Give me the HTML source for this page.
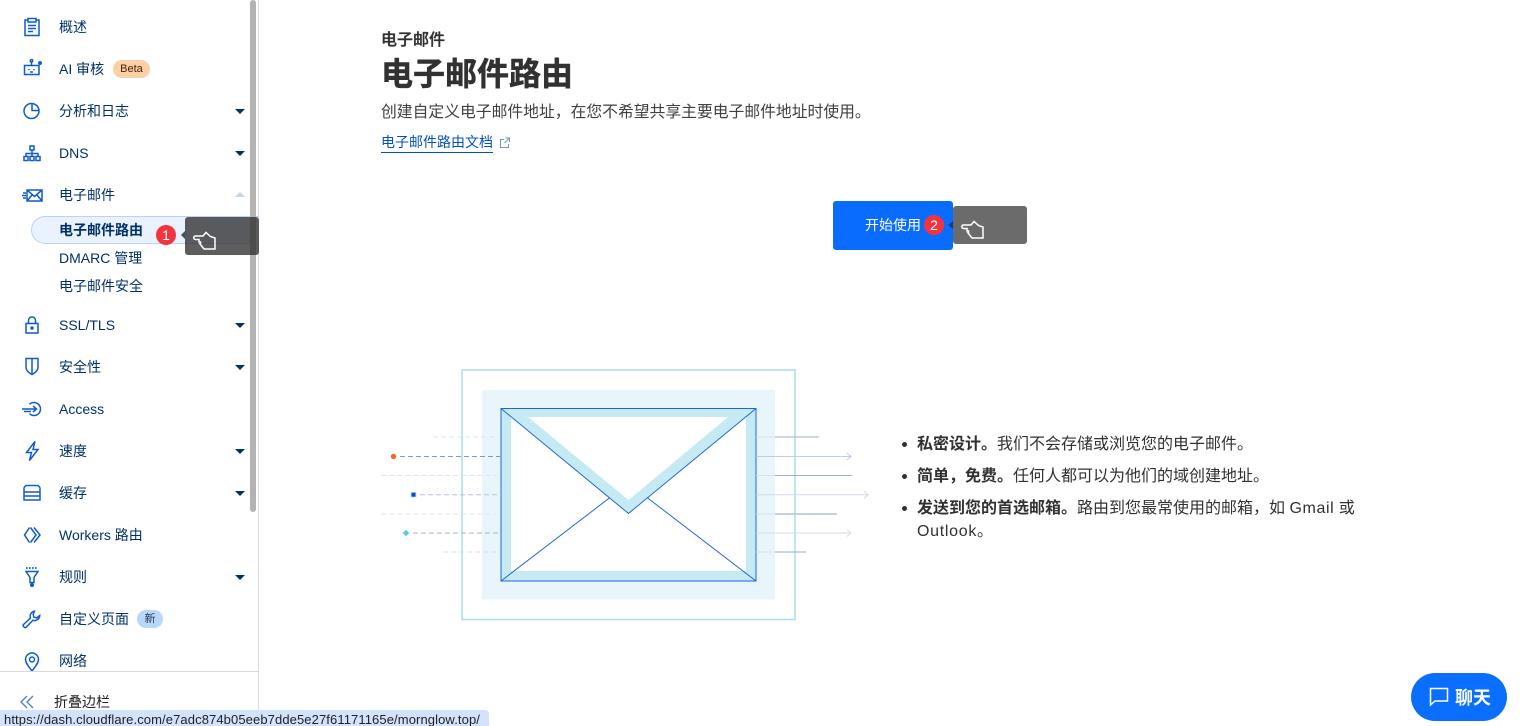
<!DOCTYPE html>
<html lang="zh"><head><meta charset="utf-8"><title>电子邮件路由</title>
<style>
html,body{margin:0;padding:0;width:1527px;height:726px;overflow:hidden;background:#fff}
body{position:relative;font-family:"Liberation Sans","Noto Sans CJK SC",sans-serif;color:#313131}
.a{position:absolute;white-space:nowrap}
.m{position:absolute;left:59px;height:20px;line-height:20px;font-size:14px;color:#00316b;white-space:nowrap}
.ic{position:absolute;left:20px;width:24px;height:24px;fill:none;stroke:#0f5ccb;stroke-width:1.5}
.dn{position:absolute;left:235px;width:0;height:0;border-left:5px solid transparent;border-right:5px solid transparent;border-top:5px solid #00316b}
.hand{position:absolute;fill:none;stroke:#fff;stroke-width:1.5}
.badge{position:absolute;width:20px;height:20px;border-radius:50%;background:#f5333f;color:#fff;font-size:14px;line-height:20px;text-align:center}
</style></head><body>
<!-- sidebar -->
<div class="a" style="left:258px;top:0;width:1px;height:726px;background:#dcdcdc"></div>
<div class="a" style="left:31px;top:216px;width:227px;height:26px;border:1px solid #b9d4f9;border-right:0;border-radius:14px 0 0 14px;background:#e9f2fe"></div>
<div class="a" style="left:250px;top:0;width:6px;height:512px;background:#b3b3b3;border-radius:3px"></div>

<svg class="ic" style="top:15px" viewBox="0 0 24 24"><path d="M8 5H5v15.500h14V5h-3M8 3.500h8V7H8zM8 10.500h8M8 13.500h8M8 16.500h5"/></svg>
<div class="m" style="top:17px">概述</div>
<svg class="ic" style="top:57px" viewBox="0 0 24 24"><path d="M4.500 8.500h14.500v9H4.500zM11.500 8.500V5M9 12v1.200M14 12v1.200M10 15h3"/><circle cx="11.500" cy="3.800" r="1.200"/><path d="M18 6h4M20 4v4M18.600 4.600l2.800 2.800M21.400 4.600l-2.800 2.800" stroke-width="1.200"/></svg>
<div class="m" style="top:59px">AI 审核</div>
<div class="a" style="left:113px;top:60px;width:37px;height:18px;border-radius:9px;background:#fbd0a6;color:#4a2004;font-size:11px;line-height:18px;text-align:center">Beta</div>
<svg class="ic" style="top:99px" viewBox="0 0 24 24"><circle cx="11.500" cy="12" r="7.500"/><path d="M12 4.500V11.500H19"/></svg>
<div class="m" style="top:101px">分析和日志</div><div class="dn" style="top:109px"></div>
<svg class="ic" style="top:141px" viewBox="0 0 24 24"><path d="M10 5h4v4h-4zM12 9v3.500M6 15.500v-3h12v3M12 12.500v3M4 15.500h4v4H4zM10 15.500h4v4h-4zM16 15.500h4v4h-4z"/></svg>
<div class="m" style="top:143px">DNS</div><div class="dn" style="top:151px"></div>
<svg class="ic" style="top:183px" viewBox="0 0 24 24"><path d="M7 7h15v11H7zM7 7l7.500 6.500L22 7M7 18l5-6M22 18l-5-6M3 10h3M2 12.500h4M3 15h3"/></svg>
<div class="m" style="top:185px">电子邮件</div>
<div class="a" style="left:235px;top:192px;width:0;height:0;border-left:5px solid transparent;border-right:5px solid transparent;border-bottom:5px solid #c6d5e6"></div>

<div class="m" style="top:220px;font-weight:700">电子邮件路由</div>
<div class="m" style="top:248px">DMARC 管理</div>
<div class="m" style="top:276px">电子邮件安全</div>

<svg class="ic" style="top:313px" viewBox="0 0 24 24"><path d="M6 10.500h12v9.500H6zM8.500 10.500V7.500a3.500 3.500 0 0 1 7 0v3"/><circle cx="12" cy="15" r="1" fill="#0f5ccb"/></svg>
<div class="m" style="top:315px">SSL/TLS</div><div class="dn" style="top:323px"></div>
<svg class="ic" style="top:355px" viewBox="0 0 24 24"><path d="M6 3.500h12v8.500c0 3.500-3 6-6 7.500-3-1.500-6-4-6-7.500zM12 3.500v16"/></svg>
<div class="m" style="top:357px">安全性</div><div class="dn" style="top:365px"></div>
<svg class="ic" style="top:397px" viewBox="0 0 24 24"><path d="M9.500 7.300a6.500 6.500 0 1 1 0 9.400M2 12h14M13 9l3.500 3-3.500 3M4 14.500h7"/></svg>
<div class="m" style="top:399px">Access</div>
<svg class="ic" style="top:439px" viewBox="0 0 24 24"><path d="M15 2.500 6.500 13.500h5L9.500 21.500l8.500-11h-5z"/></svg>
<div class="m" style="top:441px">速度</div><div class="dn" style="top:449px"></div>
<svg class="ic" style="top:481px" viewBox="0 0 24 24"><path d="M4 11V7.500a3 3 0 0 1 3-3h10a3 3 0 0 1 3 3V11zM4 11v8h16v-8M4 15h16"/></svg>
<div class="m" style="top:483px">缓存</div><div class="dn" style="top:491px"></div>
<svg class="ic" style="top:523px" viewBox="0 0 24 24"><path d="M9.500 4.500 4.500 12l5 7.500M14 4.500l6 7.500-6 7.500M10.500 4.500 16 12l-5.500 7.500"/></svg>
<div class="m" style="top:525px">Workers 路由</div>
<svg class="ic" style="top:565px" viewBox="0 0 24 24"><path d="M6 6.500h12l-4 6v5h-4v-5zM12 17.500v4"/><path d="M6 3h12" stroke-dasharray="1.600 1.400" stroke-width="1.800"/><circle cx="12" cy="20" r="1.300" fill="#0f5ccb"/></svg>
<div class="m" style="top:567px">规则</div><div class="dn" style="top:575px"></div>
<svg class="ic" style="top:607px" viewBox="0 0 24 24"><path d="M14.500 4.200a5 5 0 0 0-4 6.800L3.500 17.500c-1.200 1.300 1.200 4 2.700 2.700l6.700-7a5 5 0 0 0 6.800-4.700l-3 2.500-3-1-.5-3z"/></svg>
<div class="m" style="top:609px">自定义页面</div>
<div class="a" style="left:137px;top:610px;width:26px;height:18px;border-radius:9px;background:#b9d6fb;color:#2b3b55;font-size:11px;line-height:18px;text-align:center">新</div>
<svg class="ic" style="top:649px" viewBox="0 0 24 24"><path d="M12 22c-3-4-6.500-8-6.500-11.500a6.500 6.500 0 0 1 13 0C18.500 14 15 18 12 22z"/><circle cx="12" cy="10.500" r="2.500"/></svg>
<div class="m" style="top:651px">网络</div>

<div class="a" style="left:0;top:671px;width:258px;height:1px;background:#d9d9d9"></div>
<svg class="ic" style="top:690px;left:15px;stroke:#4a7fd0;stroke-width:1.300" viewBox="0 0 24 24"><path d="M12 6 6 12l6 6M18 6l-6 6 6 6"/></svg>
<div class="a" style="left:54px;top:692px;height:20px;line-height:20px;font-size:14px;color:#222">折叠边栏</div>

<!-- sidebar tooltip -->
<div class="a" style="left:181px;top:231px;width:0;height:0;border-top:4px solid transparent;border-bottom:4px solid transparent;border-right:4px solid #4a4f55"></div>
<div class="a" style="left:185px;top:217px;width:74px;height:38px;border-radius:3px;background:rgba(48,48,48,.78)"></div>
<svg class="hand" style="left:192px;top:231px" width="26" height="19" viewBox="0 0 26 19"><path d="M3.500 5h7.500l3-3.500 4.500 4 4.500 1.500V18H12l-4-5H8.500v-2H7V8.500H3.500a1.700 1.700 0 0 1 0-3.500z"/></svg>
<div class="badge" style="left:156px;top:225px">1</div>

<!-- header -->
<div class="a" style="left:381px;top:30px;height:22px;line-height:22px;font-size:16px;font-weight:500;color:#313131;-webkit-text-stroke:.35px #313131">电子邮件</div>
<div class="a" style="left:381px;top:52px;height:44px;line-height:44px;font-size:32px;font-weight:700;color:#313131;-webkit-text-stroke:.5px #313131">电子邮件路由</div>
<div class="a" style="left:381px;top:101px;height:24px;line-height:24px;font-size:15.800px;color:#404040">创建自定义电子邮件地址，在您不希望共享主要电子邮件地址时使用。</div>
<div class="a" style="left:381px;top:132px;height:20px;line-height:20px;font-size:14px;color:#0051c3;border-bottom:1px solid #0051c3">电子邮件路由文档</div>
<svg class="a" style="left:499px;top:137px" width="12" height="12" viewBox="0 0 12 12" fill="none" stroke="#6c93d6" stroke-width="1"><path d="M5 2.500H1.500v8h8V7M6.500 1h4v4M10.500 1 5.500 6"/></svg>

<!-- button -->
<div class="a" style="left:833px;top:201px;width:120px;height:49px;border-radius:3px;background:#0a6cff"></div>
<div class="a" style="left:865px;top:215px;height:20px;line-height:20px;font-size:14px;color:#fff">开始使用</div>
<div class="badge" style="left:924px;top:215px">2</div>
<div class="a" style="left:948px;top:221px;width:0;height:0;border-top:4.500px solid transparent;border-bottom:4.500px solid transparent;border-right:5px solid #0b3d80"></div>
<div class="a" style="left:953px;top:206px;width:74px;height:38px;border-radius:3px;background:#6b6b6b"></div>
<svg class="hand" style="left:960px;top:220px" width="26" height="19" viewBox="0 0 26 19"><path d="M3.500 5h7.500l3-3.500 4.500 4 4.500 1.500V18H12l-4-5H8.500v-2H7V8.500H3.500a1.700 1.700 0 0 1 0-3.500z"/></svg>

<!-- illustration -->
<svg class="a" style="left:370px;top:360px" width="510" height="270" viewBox="370 360 510 270" fill="none">
<rect x="462" y="370" width="333" height="249.500" stroke="#a5deee" stroke-width="1.500"/>
<rect x="482" y="390" width="293" height="209.500" fill="#e8f6fb"/>
<rect x="501" y="408.500" width="255" height="172.500" fill="#c6eaf3"/>
<rect x="511" y="417" width="235" height="154" fill="#fff"/>
<polygon points="501,408.500 628.500,513.500 756,408.500 728,417 628.500,500 528,417" fill="#c6eaf3"/>
<g stroke="#1f66dc" stroke-width="1">
<rect x="501" y="408.500" width="255" height="172.500"/>
<path d="M501 408.500 628.500 513.500 756 408.500M501 581 610 497.500M756 581 647 497.500"/>
</g>
<g stroke-width="1" stroke-dasharray="5 3">
<path d="M433 437H497" stroke="#dfe4f0"/>
<path d="M400 456.500H500" stroke="#7c9bcb"/>
<path d="M381 475.500H497" stroke="#dfe3ea"/>
<path d="M420 494.700H501" stroke="#b4c4dc"/>
<path d="M381 514H497" stroke="#e3e6f0"/>
<path d="M413 533H501" stroke="#a5b6d0"/>
<path d="M443 552H500" stroke="#d5def0"/>
</g>
<circle cx="393.500" cy="456.500" r="2.700" fill="#f6652d"/>
<rect x="411" y="492.200" width="5" height="5" fill="#0051c3" stroke="#d3e0f5"/>
<polygon points="406,529.700 409.300,533 406,536.300 402.700,533" fill="#5fc8e4"/>
<g stroke-width="1">
<path d="M756 437H775" stroke="#d6e3ee"/><path d="M775 437H819" stroke="#9db0c9"/>
<path d="M756 456.500H851M847 453l4 3.500-4 3.500" stroke="#bccde4"/>
<path d="M756 475.500H775" stroke="#d6e3ee"/><path d="M775 475.500H852" stroke="#9db0c9"/>
<path d="M756 494.700H868M864 491l4 3.700-4 3.700" stroke="#d0d9ea"/>
<path d="M756 514H775" stroke="#d6e3ee"/><path d="M775 514H836.700" stroke="#b2c0d6" stroke-width="1.500"/>
<path d="M756 533H851M847 529.500l4 3.500-4 3.500" stroke="#d5dcea"/>
<path d="M756 552H775" stroke="#d6e3ee"/><path d="M775 552H806" stroke="#98aecb"/>
</g>
</svg>

<!-- list -->
<div class="a" style="left:902px;top:442px;width:5px;height:5px;border-radius:50%;background:#313131"></div>
<div class="a" style="left:902px;top:474px;width:5px;height:5px;border-radius:50%;background:#313131"></div>
<div class="a" style="left:902px;top:506px;width:5px;height:5px;border-radius:50%;background:#313131"></div>
<div class="a" style="left:917px;top:433px;height:24px;line-height:24px;font-size:16px;color:#313131"><b>私密设计。</b>我们不会存储或浏览您的电子邮件。</div>
<div class="a" style="left:917px;top:465px;height:24px;line-height:24px;font-size:16px;color:#313131"><b>简单，免费。</b>任何人都可以为他们的域创建地址。</div>
<div class="a" style="left:917px;top:497px;height:24px;line-height:24px;font-size:16px;color:#313131"><b>发送到您的首选邮箱。</b>路由到您最常使用的邮箱，如 <span style="letter-spacing:.6px">Gmail</span> 或</div>
<div class="a" style="left:917px;top:520px;height:24px;line-height:24px;font-size:16px;color:#313131"><span style="letter-spacing:.7px">Outlook</span>。</div>

<!-- chat -->
<div class="a" style="left:1411px;top:673px;width:96px;height:48px;border-radius:24px;background:#0a6fff"></div>
<svg class="a" style="left:1429px;top:687px" width="21" height="20" viewBox="0 0 21 20" fill="none" stroke="#fff" stroke-width="1.500"><path d="M1.500 1.500h17v12.500H6l-4.500 4z"/></svg>
<div class="a" style="left:1455px;top:687px;height:22px;line-height:22px;font-size:18px;font-weight:700;color:#fff">聊天</div>

<!-- status bar -->
<div class="a" style="left:0;top:710px;width:489px;height:16px;background:#d3e3fd;border-radius:0 4px 0 0;font-size:13px;line-height:20px;letter-spacing:.1px;color:#222;padding-left:4px;box-sizing:border-box;overflow:hidden">https://dash.cloudflare.com/e7adc874b05eeb7dde5e27f61171165e/mornglow.top/</div>
</body></html>
